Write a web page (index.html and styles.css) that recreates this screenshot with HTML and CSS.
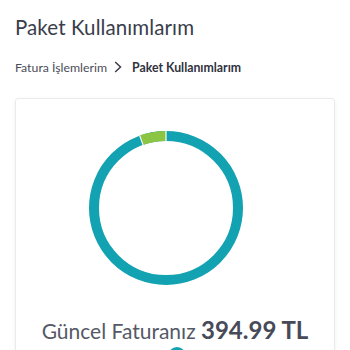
FILE: index.html
```html
<!DOCTYPE html>
<html lang="tr">
<head>
<meta charset="utf-8">
<link rel="stylesheet" href="styles.css">
</head>
<body>
<div class="page">
  <h1 class="title">Paket Kullanımlarım</h1>
  <nav class="crumbs">
    <span class="crumb">Fatura İşlemlerim</span>
    <svg class="chev" width="8" height="12" viewBox="0 0 8 12"><path d="M1.2 1 L6.5 6 L1.2 11" fill="none" stroke="#3c3f4c" stroke-width="1.5"/></svg>
    <span class="crumb current">Paket Kullanımlarım</span>
  </nav>
  <section class="card">
    <div class="chart">
      <svg width="154" height="154" viewBox="0 0 154 154">
        <circle cx="77" cy="77" r="72" fill="none" stroke="#12a2b2" stroke-width="10"/>
        <path d="M77 5 A72 72 0 0 0 52.4 9.3" fill="none" stroke="#8cc443" stroke-width="10"/>
        <line x1="77" y1="0" x2="77" y2="11" stroke="#fff" stroke-width="1.2"/>
        <line x1="50.7" y1="4.6" x2="54.4" y2="14.9" stroke="#fff" stroke-width="1.2"/>
      </svg>
    </div>
    <div class="bill"><span class="bill-label">Güncel Faturanız</span> <span class="bill-amount">394.99 TL</span></div>
    <div class="dot"></div>
  </section>
</div>
</body>
</html>
```

FILE: styles.css
```css
html, body { margin: 0; padding: 0; background: #fff; }
body { font-family: "Lato", "Noto Sans", sans-serif; color: #3c3f4c; overflow: hidden; height: 350px; }
.page { padding: 0 15px; }
.title { margin: 0; padding-top: 14px; font-size: 20.5px; font-weight: 400; line-height: 26px; color: #3a3d4a; letter-spacing: 0.1px; }
.crumbs { display: flex; align-items: center; margin-top: 19px; height: 16px; font-size: 12.3px; }
.crumb { color: #4a4d58; }
.chev { margin: 0 10px 0 7px; }
.current { font-weight: 700; color: #2f3240; }
.card { margin-top: 23px; border: 1px solid #e9ebee; border-radius: 3px; box-shadow: 0 1px 4px rgba(0,0,0,0.06); height: 300px; display: flex; flex-direction: column; align-items: center; }
.chart { margin-top: 32px; margin-right: 18px; height: 154px; }
.chart svg { display: block; }
.bill { margin-top: 31px; font-size: 21px; line-height: 28px; white-space: nowrap; }
.bill-label { color: #555966; }
.bill-amount { font-size: 24px; font-weight: 700; color: #474a57; }
.dot { margin-top: 2px; margin-left: 4px; width: 18px; height: 18px; border-radius: 50%; background: #12a2b2; }
```
